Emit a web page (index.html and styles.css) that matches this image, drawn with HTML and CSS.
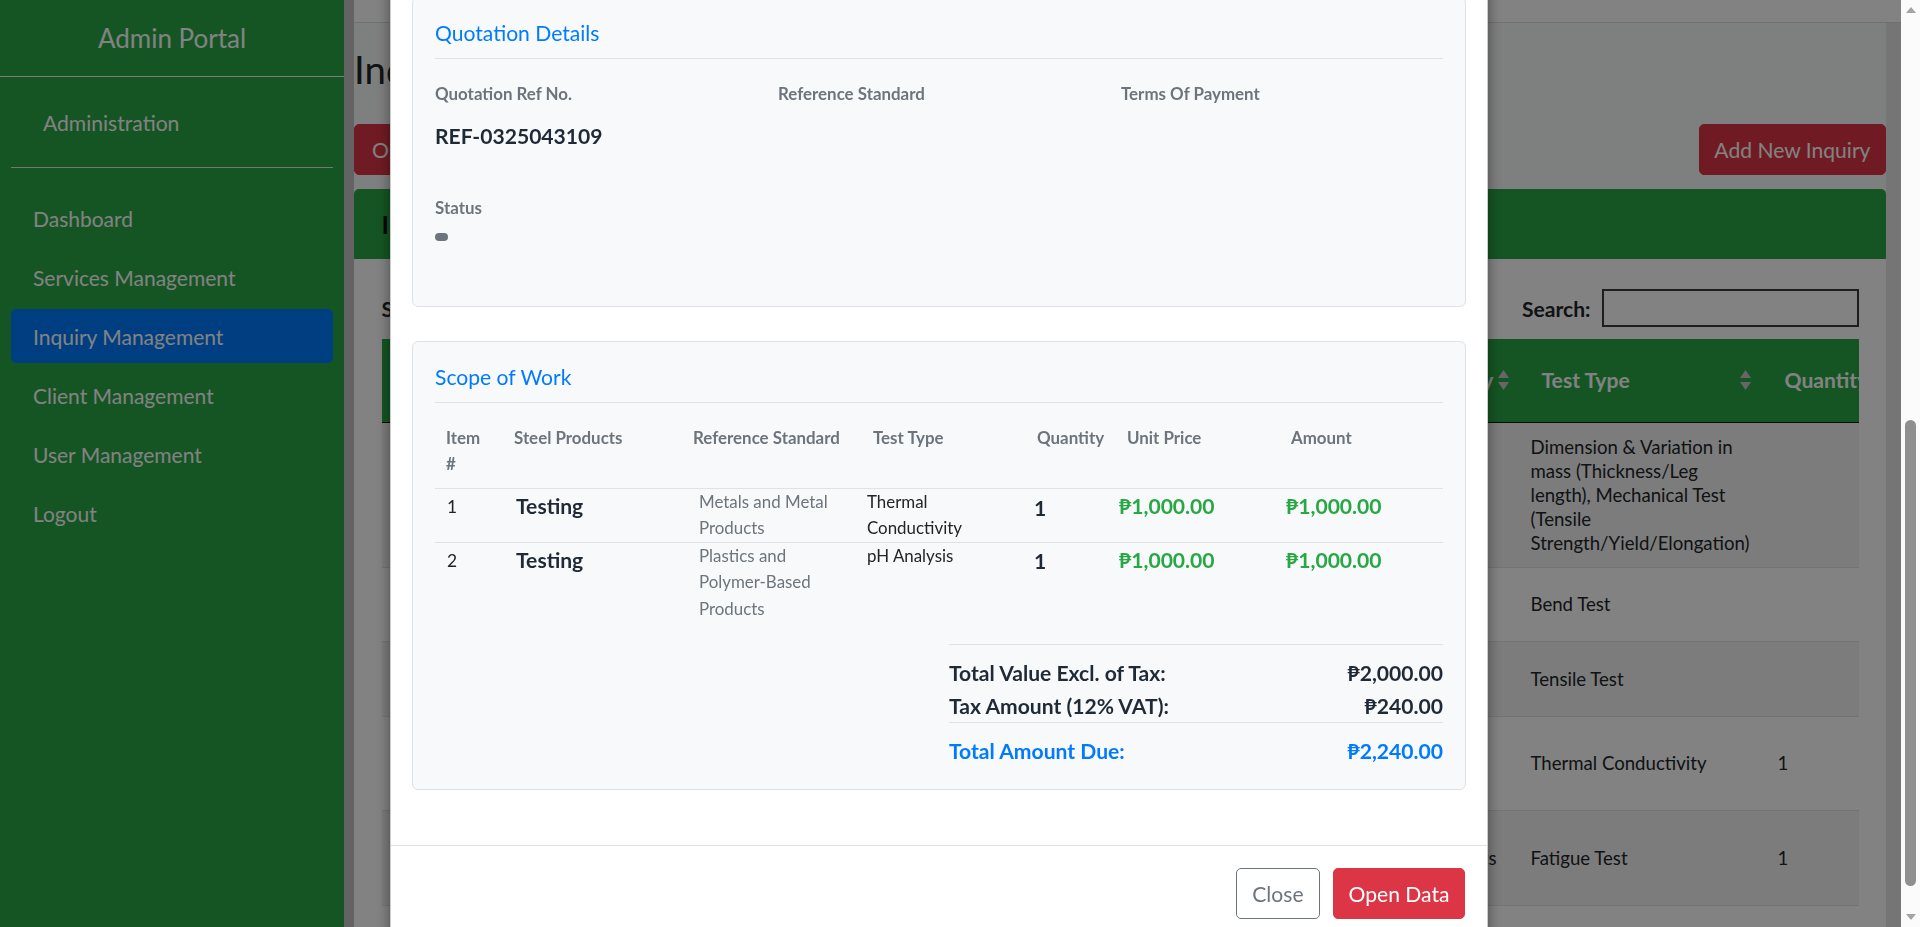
FILE: index.html
```html
<!DOCTYPE html>
<html lang="en">
<head>
<meta charset="utf-8">
<title>Inquiry Management - Admin Portal</title>
<link rel="stylesheet" href="styles.css">
</head>
<body>
<div class="app">
  <aside class="sidebar">
    <div class="brand">Admin Portal</div>
    <div class="sidebar-inner">
      <div class="section-title">Administration</div>
      <nav class="nav">
        <a class="nav-link">Dashboard</a>
        <a class="nav-link">Services Management</a>
        <a class="nav-link active">Inquiry Management</a>
        <a class="nav-link">Client Management</a>
        <a class="nav-link">User Management</a>
        <a class="nav-link">Logout</a>
      </nav>
    </div>
  </aside>
  <div class="gutter"></div>
  <main class="main">
    <div class="topbar"></div>
    <div class="content">
      <h1 class="page-title">Inquiry Management</h1>
      <div class="toolbar">
        <button class="btn btn-danger">Open Data</button>
        <button class="btn btn-danger btn-add">Add New Inquiry</button>
      </div>
      <section class="list-card">
        <div class="list-card-header"><h4>Inquiry List</h4></div>
        <div class="list-card-body">
          <div class="dt-controls">
            <label class="dt-length">Show 10 entries</label>
            <label class="dt-search">Search: <input type="text"></label>
          </div>
          <div class="dt-wrap">
            <table class="dt">
              <colgroup>
                <col class="w-a"><col class="w-b"><col class="w-c"><col class="w-d"><col class="w-e"><col class="w-f"><col class="w-g">
              </colgroup>
              <thead>
                <tr>
                  <th>Inquiry No.</th>
                  <th>Client Name</th>
                  <th>Steel Products</th>
                  <th class="th-d"><div class="th-inner end"><span>Category</span><svg class="sort" viewBox="0 0 11 20"><polygon points="0,8 5.5,0 11,8"/><polygon points="0,12 5.5,20 11,12"/></svg></div></th>
                  <th class="th-e"><div class="th-inner"><span>Test Type</span><svg class="sort" viewBox="0 0 11 20"><polygon points="0,8 5.5,0 11,8"/><polygon points="0,12 5.5,20 11,12"/></svg></div></th>
                  <th class="th-f">Quantity</th>
                  <th>Status</th>
                </tr>
              </thead>
              <tbody>
                <tr class="r1"><td>INQ-0001</td><td>Juan Dela Cruz</td><td>Angle Bars</td><td>Structural Steel</td><td class="td-e">Dimension &amp; Variation in<br>mass (Thickness/Leg<br>length), Mechanical Test<br>(Tensile<br>Strength/Yield/Elongation)</td><td class="td-f"></td><td>Pending</td></tr>
                <tr class="r2"><td>INQ-0002</td><td>Maria Santos</td><td>Rebars</td><td>Reinforcing Steel</td><td class="td-e">Bend Test</td><td class="td-f"></td><td>Pending</td></tr>
                <tr class="r3"><td>INQ-0003</td><td>Pedro Reyes</td><td>Steel Plates</td><td>Plates</td><td class="td-e">Tensile Test</td><td class="td-f"></td><td>Pending</td></tr>
                <tr class="r4"><td>INQ-0004</td><td>Ana Garcia</td><td>Testing</td><td>Metals</td><td class="td-e">Thermal Conductivity</td><td class="td-f">1</td><td>Pending</td></tr>
                <tr class="r5"><td>INQ-0005</td><td>Jose Ramos</td><td>Testing</td><td class="td-d-end">Fasteners and Bolts</td><td class="td-e">Fatigue Test</td><td class="td-f">1</td><td>Pending</td></tr>
                <tr class="r6"><td>INQ-0006</td><td>Carlo Lim</td><td>Testing</td><td>Pipes</td><td class="td-e">Impact Test</td><td class="td-f">1</td><td>Pending</td></tr>
              </tbody>
            </table>
          </div>
        </div>
      </section>
    </div>
  </main>
  <div class="scrollbar">
    <svg class="sb-arrow" viewBox="0 0 10 6"><polygon points="0,6 5,0 10,6"/></svg>
    <div class="sb-thumb"></div>
    <svg class="sb-arrow down" viewBox="0 0 10 6"><polygon points="0,0 5,6 10,0"/></svg>
  </div>
</div>

<div class="modal-backdrop"></div>
<div class="modal">
  <div class="modal-dialog">
    <div class="modal-content">
      <div class="modal-body">
        <section class="info-card">
          <h5 class="info-title">Quotation Details</h5>
          <div class="field-grid">
            <div class="field">
              <div class="field-label">Quotation Ref No.</div>
              <div class="field-value">REF-0325043109</div>
            </div>
            <div class="field">
              <div class="field-label">Reference Standard</div>
              <div class="field-value"></div>
            </div>
            <div class="field">
              <div class="field-label">Terms Of Payment</div>
              <div class="field-value"></div>
            </div>
            <div class="field">
              <div class="field-label">Status</div>
              <span class="badge"></span>
            </div>
          </div>
        </section>

        <section class="info-card">
          <h5 class="info-title">Scope of Work</h5>
          <table class="scope">
            <colgroup>
              <col class="s1"><col class="s2"><col class="s3"><col class="s4"><col class="s5"><col class="s6"><col class="s7">
            </colgroup>
            <thead>
              <tr>
                <th>Item<br>#</th>
                <th>Steel Products</th>
                <th>Reference Standard</th>
                <th>Test Type</th>
                <th>Quantity</th>
                <th class="h6">Unit Price</th>
                <th class="h7">Amount</th>
              </tr>
            </thead>
            <tbody>
              <tr>
                <td class="c1">1</td>
                <td class="c2">Testing</td>
                <td class="c3">Metals and Metal Products</td>
                <td class="c4">Thermal Conductivity</td>
                <td class="c5">1</td>
                <td class="c6">₱1,000.00</td>
                <td class="c7">₱1,000.00</td>
              </tr>
              <tr>
                <td class="c1">2</td>
                <td class="c2">Testing</td>
                <td class="c3">Plastics and Polymer-Based Products</td>
                <td class="c4">pH Analysis</td>
                <td class="c5">1</td>
                <td class="c6">₱1,000.00</td>
                <td class="c7">₱1,000.00</td>
              </tr>
            </tbody>
          </table>
          <div class="totals">
            <div class="total-row"><span>Total Value Excl. of Tax:</span><span>₱2,000.00</span></div>
            <div class="total-row"><span>Tax Amount (12% VAT):</span><span>₱240.00</span></div>
            <div class="total-row grand"><span>Total Amount Due:</span><span>₱2,240.00</span></div>
          </div>
        </section>
      </div>
      <div class="modal-footer">
        <button class="btn btn-outline">Close</button>
        <button class="btn btn-danger btn-open">Open Data</button>
      </div>
    </div>
  </div>
</div>
</body>
</html>
```

FILE: styles.css
```css
* { box-sizing: border-box; }

html, body {
  margin: 0;
  height: 100%;
}

body {
  font-family: Lato, "DejaVu Sans", sans-serif;
  color: #212529;
  background: #e6e6e6;
  overflow: hidden;
}

button { font-family: inherit; }

/* ---------- app shell ---------- */
.app {
  display: flex;
  height: 927px;
}

.sidebar {
  width: 344px;
  flex: none;
  background: #28a745;
  color: #fff;
}

.brand {
  height: 77px;
  border-bottom: 1px solid #f2f2f2;
  display: flex;
  align-items: center;
  justify-content: center;
  font-size: 26px;
}

.sidebar-inner {
  margin: 0 11px;
}

.section-title {
  padding: 28.5px 0 28.5px 32px;
  font-size: 21.1px;
  line-height: 33px;
  border-bottom: 1px solid #e8e8e8;
}

.nav {
  display: flex;
  flex-direction: column;
  gap: 5.2px;
  padding-top: 23px;
}

.nav-link {
  height: 54px;
  display: flex;
  align-items: center;
  padding-left: 22px;
  font-size: 21px;
  color: #fff;
  border-radius: 5px;
}

.nav-link.active {
  background: #007bff;
}

.gutter {
  width: 10px;
  flex: none;
  background: #c2c2c2;
}

.main {
  flex: 1;
  min-width: 0;
  display: flex;
  flex-direction: column;
}

.topbar {
  height: 23px;
  flex: none;
  background: #fff;
  border-bottom: 1px solid #dcdcdc;
}

.content {
  flex: 1;
  margin-right: 15px;
  background: #f8f9fa;
  min-width: 0;
}

.page-title {
  margin: 21.5px 0 0;
  font-size: 38.4px;
  line-height: 48px;
  font-weight: 400;
}

.toolbar {
  display: flex;
  justify-content: space-between;
  margin-top: 31.5px;
}

.btn {
  font-size: 21.1px;
  line-height: 33px;
  padding: 8px 17px;
  border: 1px solid transparent;
  border-radius: 5px;
}

.btn-danger {
  background: #dc3545;
  border-color: #dc3545;
  color: #fff;
}

.btn-add { padding: 8px 14.5px; }
.btn-open { padding: 8px 14.5px; }

.btn-outline {
  background: #fff;
  border-color: #6c757d;
  color: #6c757d;
  padding: 8px 15.5px;
}

/* ---------- list card (behind the modal) ---------- */
.list-card {
  margin-top: 14px;
  background: #fff;
  border-radius: 5px;
}

.list-card-header {
  background: #28a745;
  border-radius: 5px 5px 0 0;
  padding: 20px 27.5px;
}

.list-card-header h4 {
  margin: 0;
  font-size: 25.3px;
  line-height: 30px;
  font-weight: 700;
  color: #111;
}

.list-card-body {
  padding: 30px 27.5px 0;
}

.dt-controls {
  display: flex;
  justify-content: space-between;
  align-items: center;
  height: 38px;
}

.dt-length {
  font-size: 21.1px;
  font-weight: 700;
}

.dt-search {
  display: flex;
  align-items: center;
  gap: 11px;
  font-size: 21.1px;
  font-weight: 700;
}

.dt-search input {
  width: 257px;
  height: 38px;
  border: 2px solid #3c3c3c;
  background: #fff;
}

.dt-wrap {
  margin-top: 12px;
  overflow: hidden;
}

.dt {
  width: 1718px;
  table-layout: fixed;
  border-collapse: collapse;
  font-size: 18.6px;
  line-height: 24px;
}

.w-a { width: 178px; }
.w-b { width: 240px; }
.w-c { width: 300px; }
.w-d { width: 418px; }
.w-e { width: 242px; }
.w-f { width: 190px; }
.w-g { width: 150px; }

.dt th {
  background: #28a745;
  color: #fff;
  font-weight: 700;
  font-size: 21.1px;
  line-height: 26px;
  height: 83px;
  padding: 0 13px;
  text-align: left;
  white-space: nowrap;
  border-bottom: 1px solid #111;
}

.dt .th-d { padding: 0 9px 0 13px; }
.dt .th-e { padding: 0 9px 0 24px; }
.dt .th-f { padding-left: 25px; }

.th-inner {
  display: flex;
  align-items: center;
  justify-content: space-between;
}

.th-inner.end {
  justify-content: flex-end;
  gap: 4px;
}

.sort {
  width: 11px;
  height: 20px;
  flex: none;
  fill: #c9c9c9;
}

.dt td {
  padding: 12px 13px;
  vertical-align: middle;
  border-bottom: 1px solid #dee2e6;
  white-space: nowrap;
  overflow: hidden;
}

.dt tbody tr:nth-child(odd) { background: #f3f3f3; }
.dt tbody tr:nth-child(even) { background: #fff; }

.dt .r1 { height: 144px; }
.dt .r2 { height: 74px; }
.dt .r3 { height: 75px; }
.dt .r4 { height: 94px; }
.dt .r5 { height: 95px; }
.dt .r6 { height: 94px; }

.dt .td-d-end { text-align: right; padding-right: 21px; }
.dt .td-e { padding-left: 13px; }
.dt .td-f { padding-left: 18px; }

/* ---------- scrollbar ---------- */
.scrollbar {
  width: 19px;
  flex: none;
  background: #fbfbfb;
  display: flex;
  flex-direction: column;
  align-items: center;
}

.sb-arrow {
  width: 10px;
  height: 6px;
  margin-top: 7px;
  fill: #a3a3a3;
  flex: none;
}

.sb-arrow.down {
  margin-top: auto;
  margin-bottom: 7px;
}

.sb-thumb {
  width: 11px;
  height: 466px;
  margin-top: 407px;
  border-radius: 6px;
  background: #8f8f8f;
  flex: none;
}

/* ---------- modal ---------- */
.modal-backdrop {
  position: fixed;
  top: 0;
  left: 0;
  bottom: 0;
  right: 19px;
  background: rgba(0, 0, 0, 0.49);
}

.modal {
  position: fixed;
  top: 0;
  left: 0;
  bottom: 0;
  right: 19px;
  overflow: hidden;
}

.modal-dialog {
  position: absolute;
  left: 390px;
  top: -26px;
  width: 1098px;
}

.modal-content {
  background: #fff;
  border: 1px solid rgba(0, 0, 0, 0.2);
  border-radius: 5px;
  box-shadow: 0 0 14px rgba(0, 0, 0, 0.45);
}

.modal-body {
  padding: 22px 21px 21px;
}

.info-card {
  background: #f8f9fa;
  border: 1px solid #dee2e6;
  border-radius: 6px;
  padding: 22px;
  margin-bottom: 34px;
}

.info-title {
  margin: 0 0 11px;
  font-size: 21.1px;
  line-height: 26.4px;
  font-weight: 400;
  color: #007bff;
  padding-bottom: 11.6px;
  border-bottom: 1px solid #dee2e6;
}

.field-grid {
  display: grid;
  grid-template-columns: 343px 343px 1fr;
  padding-top: 11px;
}

.field {
  margin-bottom: 43.3px;
}

.field-label {
  font-size: 16.9px;
  line-height: 26.4px;
  font-weight: 700;
  color: #6c757d;
  margin-bottom: 11.3px;
}

.field-value {
  font-size: 21.1px;
  line-height: 33px;
  font-weight: 700;
  color: #1f2a37;
  min-height: 33px;
}

.badge {
  display: block;
  width: 13px;
  height: 8px;
  border-radius: 4px;
  background: #6c757d;
}

/* scope table */
.scope {
  width: 1008px;
  table-layout: fixed;
  border-collapse: collapse;
  font-size: 16.9px;
  line-height: 26.4px;
}

.s1 { width: 68px; }
.s2 { width: 179px; }
.s3 { width: 180px; }
.s4 { width: 164px; }
.s5 { width: 82px; }
.s6 { width: 168px; }
.s7 { width: 167px; }

.scope th {
  text-align: left;
  vertical-align: top;
  font-weight: 700;
  color: #6c757d;
  padding: 10.6px 2px 10.6px 11px;
  white-space: nowrap;
  border-bottom: 1px solid #dee2e6;
}

.scope th.h6 { padding-left: 19px; }
.scope th.h7 { padding-left: 15px; }

.scope td {
  vertical-align: top;
  padding: 0;
  border-bottom: 1px solid #dee2e6;
}

.scope tbody tr:last-child td { border-bottom: 0; }

.scope .c1 { padding: 5px 0 0 12px; color: #212529; font-size: 17.4px; }
.scope .c2 { padding-left: 13px; font-size: 21.1px; line-height: 33px; font-weight: 700; color: #1f2a37; }
.scope .c3 { padding: 0 11px 0 17px; color: #6c757d; }
.scope .c4 { padding: 0 20px 0 5px; color: #212529; }
.scope .c5 { padding: 1.5px 0 0 8px; font-size: 21.1px; line-height: 33px; font-weight: 700; color: #1f2a37; }
.scope .c6 { padding-left: 11px; font-size: 21.1px; line-height: 33px; font-weight: 700; color: #28a745; }
.scope .c7 { padding-left: 10px; font-size: 21.1px; line-height: 33px; font-weight: 700; color: #28a745; }

.totals {
  width: 494px;
  margin: 22px 0 0 auto;
  border-top: 1px solid #dee2e6;
  padding-top: 11px;
}

.total-row {
  display: flex;
  justify-content: space-between;
  font-size: 21.1px;
  line-height: 33px;
  font-weight: 700;
  color: #1f2a37;
}

.total-row.grand {
  border-top: 1px solid #dee2e6;
  padding-top: 11px;
  color: #007bff;
}

.modal-footer {
  border-top: 1px solid #dee2e6;
  padding: 22px 22px;
  display: flex;
  justify-content: flex-end;
  gap: 13px;
}
```
